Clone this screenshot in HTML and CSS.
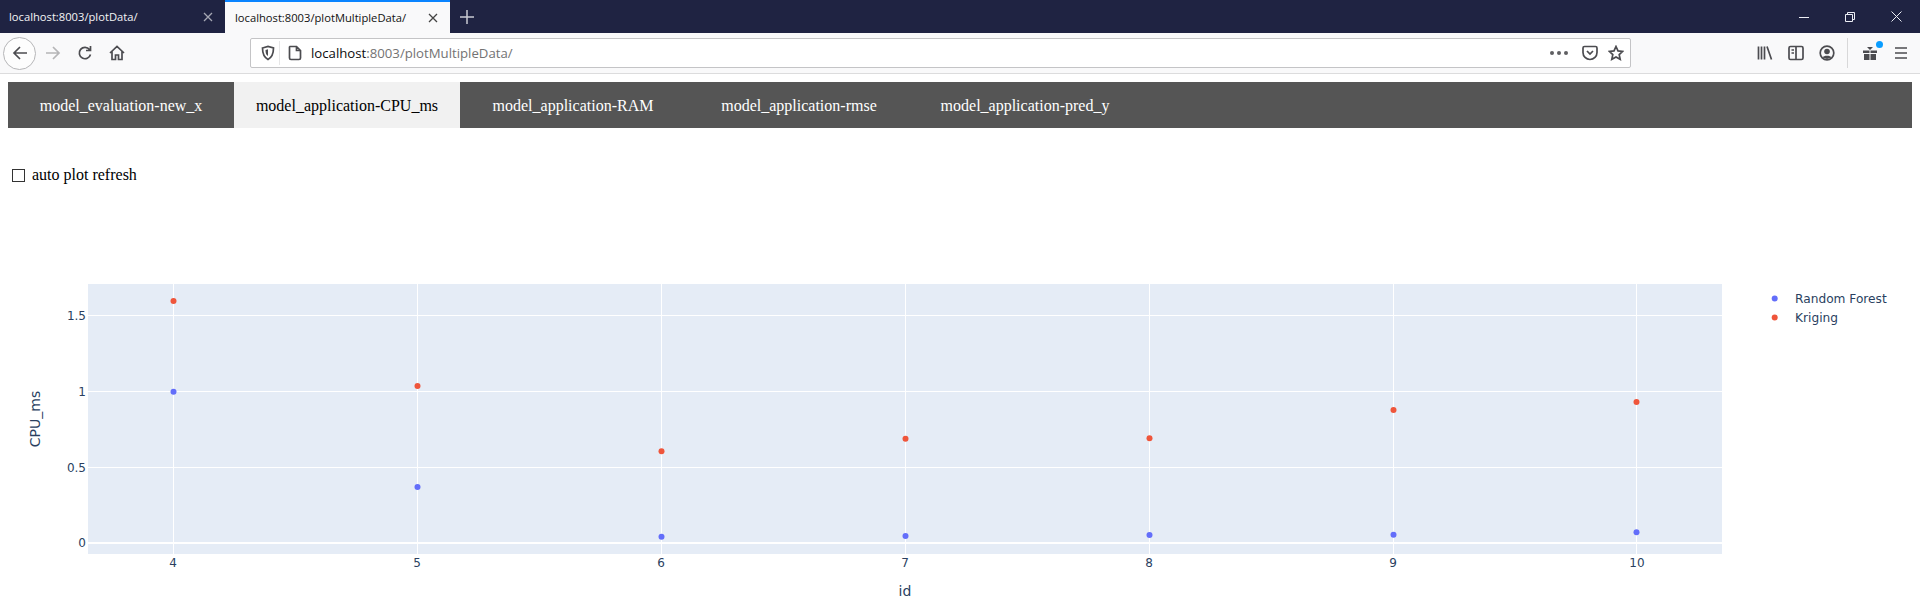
FILE: index.html
```html
<!DOCTYPE html>
<html lang="en">
<head>
  <meta charset="UTF-8" />
  <meta name="viewport" content="width=device-width, initial-scale=1.0"/>
  <title>localhost:8003/plotMultipleData/</title>
  <link rel="stylesheet" href="styles.css">
</head>
<body>
  <!-- browser chrome -->
  <div class="tabstrip">
    <div class="browser-tab">
      <span class="browser-tab-title">localhost:8003/plotData/</span>
      <svg class="tab-close" width="10" height="10" viewBox="0 0 10 10"><path d="M1 1l8 8M9 1l-8 8"/></svg>
    </div>
    <div class="browser-tab browser-tab-active">
      <span class="browser-tab-title">localhost:8003/plotMultipleData/</span>
      <svg class="tab-close" width="10" height="10" viewBox="0 0 10 10"><path d="M1 1l8 8M9 1l-8 8"/></svg>
    </div>
    <svg class="new-tab" width="14" height="14" viewBox="0 0 14 14"><path d="M7 0v14M0 7h14"/></svg>
    <div class="window-btns">
      <svg width="10" height="10" viewBox="0 0 10 10"><path d="M0 5.500h10"/></svg>
      <svg width="10" height="10" viewBox="0 0 10 10"><path d="M.5 2.500h7v7h-7zM2.500 2.500v-2h7v7h-2"/></svg>
      <svg width="11" height="11" viewBox="0 0 11 11"><path d="M.5.5l10 10M10.500.5l-10 10"/></svg>
    </div>
  </div>

  <div class="toolbar">
    <div class="back-btn">
      <svg width="16" height="16" viewBox="0 0 16 16"><path d="M15 8H2M8 2L2 8l6 6"/></svg>
    </div>
    <svg class="icon icon-off" width="16" height="16" viewBox="0 0 16 16"><path d="M1 8h13M8 2l6 6-6 6"/></svg>
    <svg class="icon" width="16" height="16" viewBox="0 0 16 16"><path d="M13.500 9.500A5.700 5.700 0 1 1 12.500 4.500M13.500 1v4.500H9"/></svg>
    <svg class="icon" width="16" height="16" viewBox="0 0 16 16"><path d="M1 8l7-6.500L15 8M3 6.500V14.500h3.500V10h3v4.500H13V6.500"/></svg>

    <div class="urlbar">
      <svg class="icon url-shield" width="16" height="16" viewBox="0 0 16 16"><path d="M2.500 3L8 1.500 13.500 3c0 5-1 9-5.500 11.500C3.500 12 2.500 8 2.500 3z"/><path class="fill" d="M5.500 5L8 4.300V11C6 10 5.500 8 5.500 5z"/></svg>
      <div class="url-sep"></div>
      <svg class="icon" width="16" height="16" viewBox="0 0 16 16"><path d="M3 1.500h6.500l4 4V13a1.500 1.500 0 0 1-1.500 1.500H4A1.500 1.500 0 0 1 2.500 13V2zM9.500 1.500v4h4"/></svg>
      <div class="url-text">localhost<span class="url-dim">:8003/plotMultipleData/</span></div>
      <div class="url-dots"><i></i><i></i><i></i></div>
      <svg class="icon" width="16" height="16" viewBox="0 0 16 16"><path d="M2.500 1.500h11A1.500 1.500 0 0 1 15 3v4.500a7 7 0 0 1-14 0V3a1.500 1.500 0 0 1 1.500-1.500zM5 6l3 3 3-3"/></svg>
      <svg class="icon" width="16" height="16" viewBox="0 0 16 16"><path d="M8 1.500l2 4.400 4.700.5-3.500 3.200 1 4.700L8 12l-4.200 2.300 1-4.700L1.300 6.400 6 5.900z"/></svg>
    </div>

    <div class="toolbar-right">
      <svg class="icon" width="16" height="16" viewBox="0 0 16 16"><path d="M1.500 1.500v13M4.500 1.500v13M7.500 1.500v13M10 1.500l4.500 13"/></svg>
      <svg class="icon" width="16" height="16" viewBox="0 0 16 16"><path d="M2.500 1.500h11A1.500 1.500 0 0 1 15 3v10a1.500 1.500 0 0 1-1.500 1.500h-11A1.500 1.500 0 0 1 1 13V3a1.500 1.500 0 0 1 1.500-1.500zM8 1.500v13M3.500 5H6M3.500 8H6"/></svg>
      <svg class="icon" width="16" height="16" viewBox="0 0 16 16"><circle cx="8" cy="8" r="6.800"/><circle class="fill" cx="8" cy="6.500" r="2.800"/><path class="fill" d="M3.500 12.500c1-2.500 8-2.500 9 0L8 14z"/></svg>
      <div class="toolbar-sep"></div>
      <div class="gift">
        <svg width="16" height="16" viewBox="0 0 16 16"><path class="fill" d="M1 5.500h6.500V8H1zM8.500 5.500H15V8H8.500zM2 9h5.500v6H2zM8.500 9H14v6H8.500zM5 2h6L8 5z"/></svg>
        <span class="gift-dot"></span>
      </div>
      <svg class="icon" width="16" height="16" viewBox="0 0 16 16"><path d="M2 3h12M2 8h12M2 13h12"/></svg>
    </div>
  </div>

  <!-- page -->
  <div class="tabs">
    <button class="tab">model_evaluation-new_x</button>
    <button class="tab active">model_application-CPU_ms</button>
    <button class="tab">model_application-RAM</button>
    <button class="tab">model_application-rmse</button>
    <button class="tab">model_application-pred_y</button>
  </div>

  <label class="refresh">
    <input type="checkbox">
    <span>auto plot refresh</span>
  </label>

  <svg class="plot" width="1904" height="337" viewBox="0 274 1904 337">
    <rect class="plot-bg" x="80" y="284" width="1634" height="270"/>
    <g class="grid">
      <path d="M165.500 284v270M409.500 284v270M653.500 284v270M897.500 284v270M1141.500 284v270M1385.500 284v270M1628.500 284v270"/>
      <path d="M80 315.500h1634M80 391.500h1634M80 467.500h1634"/>
      <path class="zero" d="M80 543h1634"/>
    </g>
    <g class="points-blue">
      <circle cx="165.500" cy="391.700" r="3"/>
      <circle cx="409.500" cy="487" r="3"/>
      <circle cx="653.500" cy="536.700" r="3"/>
      <circle cx="897.500" cy="536" r="3"/>
      <circle cx="1141.500" cy="535" r="3"/>
      <circle cx="1385.500" cy="534.700" r="3"/>
      <circle cx="1628.500" cy="532.300" r="3"/>
      <circle cx="1766.700" cy="298.400" r="3"/>
    </g>
    <g class="points-red">
      <circle cx="165.500" cy="301" r="3"/>
      <circle cx="409.500" cy="386" r="3"/>
      <circle cx="653.500" cy="451.300" r="3"/>
      <circle cx="897.500" cy="438.700" r="3"/>
      <circle cx="1141.500" cy="438.300" r="3"/>
      <circle cx="1385.500" cy="410" r="3"/>
      <circle cx="1628.500" cy="402" r="3"/>
      <circle cx="1766.700" cy="317.400" r="3"/>
    </g>
    <g class="axis-y">
      <text x="78" y="320">1.5</text>
      <text x="78" y="396">1</text>
      <text x="78" y="472">0.5</text>
      <text x="78" y="547">0</text>
    </g>
    <g class="axis-x">
      <text x="165" y="567">4</text>
      <text x="409" y="567">5</text>
      <text x="653" y="567">6</text>
      <text x="897" y="567">7</text>
      <text x="1141" y="567">8</text>
      <text x="1385" y="567">9</text>
      <text x="1629" y="567">10</text>
    </g>
    <text class="axis-title" x="897" y="596">id</text>
    <text class="axis-title" transform="translate(32 419) rotate(-90)">CPU_ms</text>
    <g class="legend">
      <text x="1787" y="303">Random Forest</text>
      <text x="1787" y="322">Kriging</text>
    </g>
  </svg>
</body>
</html>
```

FILE: styles.css
```css
html, body {
  height: 100%;
}
body {
  margin: 0;
  overflow: hidden;
  background: #fff;
  font-family: "Liberation Serif", serif;
}

/* browser chrome */
.tabstrip {
  display: flex;
  align-items: stretch;
  height: 33px;
  background: #1f2342;
  font-family: "Open Sans", sans-serif;
  font-size: 11.200px;
}
.browser-tab {
  display: flex;
  align-items: center;
  justify-content: space-between;
  box-sizing: border-box;
  width: 225px;
  padding: 0 12px 0 9px;
  color: #f4f4f6;
}
.browser-tab-active {
  padding-left: 10px;
  background: #f9f9fa;
  border-top: 2px solid #0a84ff;
  color: #111;
}
.tab-close path {
  fill: none;
  stroke: #a5a7b3;
  stroke-width: 1.300;
}
.browser-tab-active .tab-close path {
  stroke: #444;
}
.new-tab {
  align-self: center;
  margin-left: 10px;
}
.new-tab path {
  fill: none;
  stroke: #c9cad2;
  stroke-width: 1.500;
}
.window-btns {
  display: flex;
  align-items: center;
  gap: 36px;
  margin-left: auto;
  padding-right: 18px;
}
.window-btns path {
  fill: none;
  stroke: #eceef5;
  stroke-width: 1;
}

.toolbar {
  display: flex;
  align-items: center;
  box-sizing: border-box;
  height: 41px;
  padding-left: 3px;
  background: #f9f9fa;
  border-bottom: 1px solid #dcdcdd;
}
.icon path, .icon circle {
  fill: none;
  stroke: #4c4c50;
  stroke-width: 1.700;
}
.icon .fill, .gift .fill {
  fill: #4c4c50;
  stroke: none;
}
.icon-off path {
  stroke: #b5b5b7;
}
.toolbar > .icon {
  margin-left: 16px;
}
.toolbar > .icon-off {
  margin-left: 9px;
}
.back-btn {
  display: flex;
  align-items: center;
  justify-content: center;
  box-sizing: border-box;
  width: 33px;
  height: 33px;
  border: 1px solid #b6b6b8;
  border-radius: 50%;
  background: #fdfdfd;
}
.back-btn path {
  fill: none;
  stroke: #4c4c50;
  stroke-width: 1.700;
}
.urlbar {
  display: flex;
  align-items: center;
  box-sizing: border-box;
  width: 1381px;
  height: 30px;
  margin-left: 125px;
  padding: 0 6px 0 9px;
  background: #fff;
  border: 1px solid #c4c4c6;
  border-radius: 2px;
  font-family: "Open Sans", sans-serif;
  font-size: 13.200px;
  color: #0c0c0d;
}
.url-sep {
  width: 1px;
  height: 24px;
  margin: 0 7px 0 3px;
  background: #e6e6e7;
}
.url-text {
  margin-left: 8px;
}
.url-dim {
  color: #737373;
}
.url-dots {
  display: flex;
  gap: 3px;
  margin-left: auto;
  margin-right: 14px;
}
.url-dots i {
  width: 4px;
  height: 4px;
  border-radius: 50%;
  background: #5f5f62;
}
.urlbar > .icon:last-child {
  margin-left: 10px;
}
.toolbar-right {
  display: flex;
  align-items: center;
  gap: 15px;
  margin-left: 126px;
}
.toolbar-sep {
  width: 1px;
  height: 30px;
  margin: 0 -1px 0 -3px;
  background: #d8d8d9;
}
.gift {
  position: relative;
  display: flex;
}
.gift-dot {
  position: absolute;
  top: -4px;
  right: -5px;
  width: 7px;
  height: 7px;
  border-radius: 50%;
  background: #0a9dff;
}

/* page tabs */
.tabs {
  display: flex;
  margin: 8px 8px 0;
  background: #555;
}
.tab {
  width: 226px;
  height: 46px;
  padding: 2px 0 0;
  border: none;
  background: #555;
  color: #fff;
  font-family: inherit;
  font-size: 16px;
}
.tab.active {
  background: #f1f1f1;
  color: #000;
}

.refresh {
  display: flex;
  align-items: center;
  height: 18px;
  margin: 38px 8px 0;
  font-size: 16px;
}
.refresh input {
  appearance: none;
  box-sizing: border-box;
  width: 13px;
  height: 13px;
  margin: 0 7px 0 4px;
  background: #fff;
  border: 1px solid #333;
}

/* plot, everything placed on the svg canvas */
.plot {
  display: block;
  margin: 90px 0 0 8px;
  font-family: "DejaVu Sans", sans-serif;
  font-size: 12px;
  fill: #2a3f5f;
}
.plot-bg {
  fill: #e5ecf6;
}
.grid path {
  fill: none;
  stroke: #fff;
  stroke-width: 1;
}
.grid .zero {
  stroke-width: 2;
}
.points-blue circle {
  fill: #636efa;
}
.points-red circle {
  fill: #ef553b;
}
.axis-y text {
  text-anchor: end;
}
.axis-x text {
  text-anchor: middle;
}
.axis-title {
  font-size: 14px;
  text-anchor: middle;
}
.legend text {
  font-size: 12.200px;
}
```
